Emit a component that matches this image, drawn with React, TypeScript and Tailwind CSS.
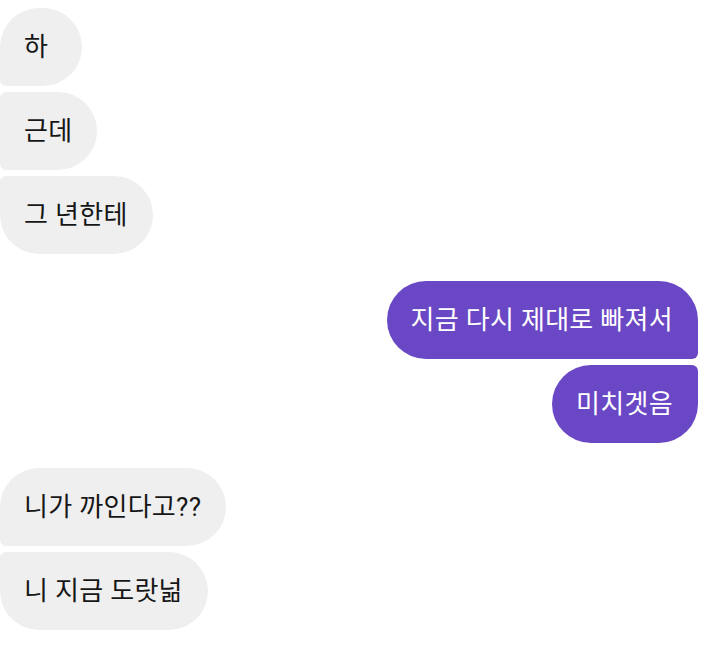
export default function App() {
  const left1 = ["하", "근데", "그 년한테"];
  const right = ["지금 다시 제대로 빠져서", "미치겟음"];
  const left2 = ["니가 까인다고??", "니 지금 도랏넒"];

  const leftRadius = (i: number, n: number) =>
    i === 0
      ? "rounded-[39px] rounded-bl-[6px]"
      : i === n - 1
      ? "rounded-[39px] rounded-tl-[6px]"
      : "rounded-[39px] rounded-tl-[6px] rounded-bl-[6px]";

  const rightRadius = (i: number, n: number) =>
    i === 0
      ? "rounded-[39px] rounded-br-[6px]"
      : i === n - 1
      ? "rounded-[39px] rounded-tr-[6px]"
      : "rounded-[39px] rounded-tr-[6px] rounded-br-[6px]";

  return (
    <div className="min-h-[648px] w-[715px] bg-white pt-2 font-['Roboto','Noto_Sans_CJK_KR',sans-serif] text-[26px] tracking-[0.3px]">
      {/* first group */}
      <div className="flex flex-col items-start gap-[6px]">
        {left1.map((t, i) => (
          <div
            key={t}
            className={`h-[78px] min-w-[82px] flex items-center pl-6 pr-[25px] bg-[#efefef] text-[#161616] ${leftRadius(i, left1.length)}`}
          >
            {t}
          </div>
        ))}
      </div>

      {/* mine */}
      <div className="mt-[27px] flex flex-col items-end gap-[6px] pr-[17px]">
        {right.map((t, i) => (
          <div
            key={t}
            className={`h-[78px] min-w-[82px] flex items-center pl-6 pr-[25px] bg-[#6a47c4] text-white ${rightRadius(i, right.length)}`}
          >
            {t}
          </div>
        ))}
      </div>

      {/* last group */}
      <div className="mt-[25px] flex flex-col items-start gap-[6px]">
        {left2.map((t, i) => (
          <div
            key={t}
            className={`h-[78px] min-w-[82px] flex items-center pl-6 pr-[25px] bg-[#efefef] text-[#161616] ${leftRadius(i, left2.length)}`}
          >
            {t}
          </div>
        ))}
      </div>
    </div>
  );
}
